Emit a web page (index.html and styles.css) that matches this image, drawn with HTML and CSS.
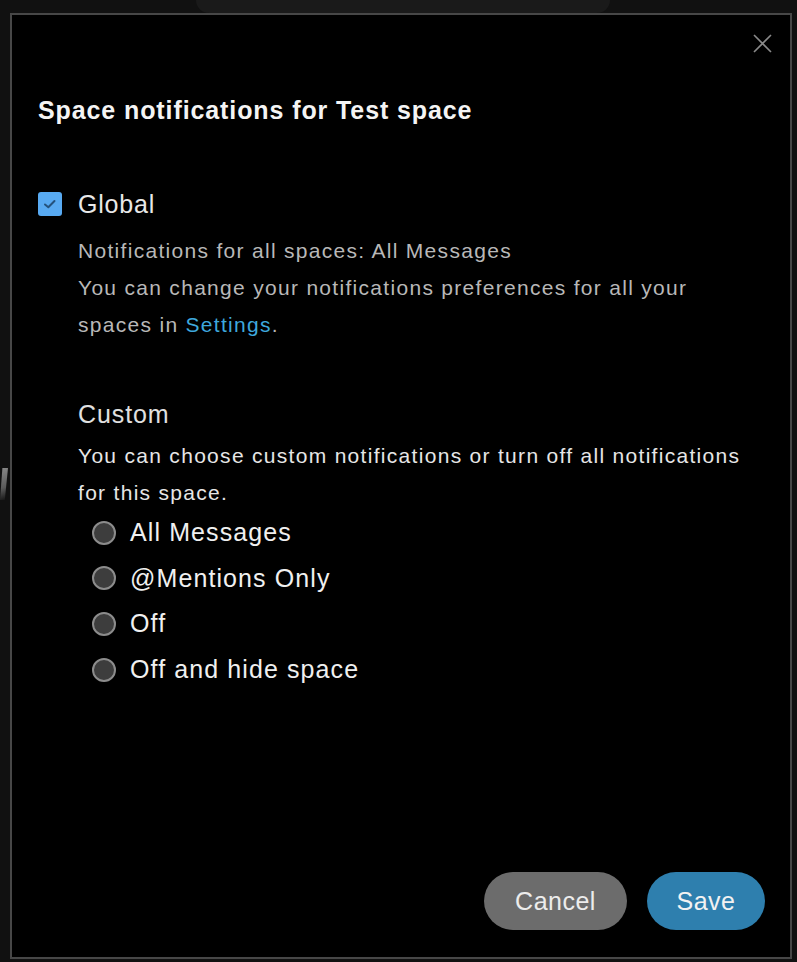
FILE: index.html
```html
<!DOCTYPE html>
<html lang="en">
<head>
<meta charset="utf-8">
<title>Space notifications</title>
<link rel="stylesheet" href="styles.css">
</head>
<body>
<div class="topstrip"><div class="topshape"></div></div>
<div class="stage">
  <div class="edge"><div class="wedge"></div></div>
  <div class="dialog">
    <div class="topbar">
      <button class="close" aria-label="Close">
        <svg width="20" height="20" viewBox="0 0 20 20"><path d="M2 2L19 19M19 2L2 19" stroke="#8a8a8a" stroke-width="1.6" fill="none"/></svg>
      </button>
    </div>
    <h1 class="title">Space notifications for Test space</h1>
    <label class="global">
      <span class="checkbox"><svg width="16" height="16" viewBox="0 0 16 16"><path d="M3 8.5L6.3 11.2L12.5 5" stroke="#24527c" stroke-width="2" fill="none" stroke-linecap="round" stroke-linejoin="round"/></svg></span>
      <span class="global-label">Global</span>
    </label>
    <p class="desc">Notifications for all spaces: All Messages<br>You can change your notifications preferences for all your<br>spaces in <a class="link" href="#">Settings</a>.</p>
    <h2 class="custom">Custom</h2>
    <p class="custom-desc">You can choose custom notifications or turn off all notifications<br>for this space.</p>
    <ul class="radios">
      <li class="radio-row"><span class="radio"></span><span class="radio-label">All Messages</span></li>
      <li class="radio-row"><span class="radio"></span><span class="radio-label">@Mentions Only</span></li>
      <li class="radio-row"><span class="radio"></span><span class="radio-label">Off</span></li>
      <li class="radio-row"><span class="radio"></span><span class="radio-label">Off and hide space</span></li>
    </ul>
    <div class="actions">
      <button class="btn btn-cancel">Cancel</button>
      <button class="btn btn-save">Save</button>
    </div>
  </div>
</div>
</body>
</html>
```
FILE: styles.css
```css
html, body {
  margin: 0;
  padding: 0;
  background: #111111;
  height: 962px;
  overflow: hidden;
  font-family: "Liberation Sans", Arial, sans-serif;
}
.topstrip {
  height: 13px;
  display: flex;
}
.topshape {
  margin-left: 196px;
  width: 414px;
  height: 13px;
  background: #1a1a1a;
  border-radius: 0 0 14px 14px;
}
.stage {
  display: flex;
}
.edge {
  width: 10px;
  display: flex;
  flex-direction: column;
  padding-top: 455px;
}
.wedge {
  width: 8px;
  height: 32px;
  background: linear-gradient(160deg, #8a8a8a 0%, #5a5a5a 60%, #111 100%);
  clip-path: polygon(30% 0, 100% 0, 60% 100%, 0 100%);
}
.dialog {
  width: 782px;
  height: 946px;
  box-sizing: border-box;
  border: 2px solid #474747;
  background: #000;
  padding: 0 25px 27px 26px;
  display: flex;
  flex-direction: column;
}
.topbar {
  height: 56px;
  display: flex;
  justify-content: flex-end;
  align-items: center;
}
.close {
  width: 20px;
  height: 20px;
  padding: 0;
  margin-right: -7px;
  border: none;
  background: none;
  display: flex;
}
.title {
  margin: 24px 0 0 0;
  font-size: 25px;
  line-height: 30px;
  font-weight: 700;
  color: #f4f4f4;
  letter-spacing: 0.9px;
}
.global {
  margin-top: 64px;
  height: 30px;
  display: flex;
  align-items: center;
}
.checkbox {
  width: 24px;
  height: 24px;
  border-radius: 3px;
  background: #58aaf2;
  display: flex;
  align-items: center;
  justify-content: center;
}
.global-label {
  margin-left: 16px;
  font-size: 25px;
  color: #e8e8e8;
  letter-spacing: 0.8px;
}
.desc {
  margin: 13px 0 0 40px;
  font-size: 21px;
  line-height: 37px;
  color: #b8b8b8;
  letter-spacing: 1.3px;
}
.link {
  color: #3ea8dd;
  text-decoration: none;
}
.custom {
  margin: 56px 0 0 40px;
  font-size: 25px;
  line-height: 30px;
  font-weight: 400;
  color: #e0e0e0;
  letter-spacing: 0.9px;
}
.custom-desc {
  margin: 8px 0 0 40px;
  font-size: 21px;
  line-height: 37px;
  color: #e6e6e6;
  letter-spacing: 1.3px;
}
.radios {
  list-style: none;
  margin: -1px 0 0 54px;
  padding: 0;
}
.radio-row {
  height: 45.6px;
  display: flex;
  align-items: center;
}
.radio {
  width: 24px;
  height: 24px;
  box-sizing: border-box;
  border-radius: 50%;
  border: 2px solid #8c8c8c;
  background: #3d3d3d;
}
.radio-label {
  margin-left: 14px;
  font-size: 25px;
  color: #f0f0f0;
  letter-spacing: 1.1px;
}
.actions {
  margin-top: auto;
  display: flex;
  justify-content: flex-end;
  gap: 20px;
}
.btn {
  height: 58px;
  border: none;
  border-radius: 29px;
  font-family: "Liberation Sans", Arial, sans-serif;
  font-size: 25px;
  letter-spacing: 0.5px;
  padding: 0;
}
.btn-cancel {
  width: 143px;
  background: #6c6c6c;
  color: #ececec;
}
.btn-save {
  width: 118px;
  background: #2e7fae;
  color: #f2f2f2;
}
```
